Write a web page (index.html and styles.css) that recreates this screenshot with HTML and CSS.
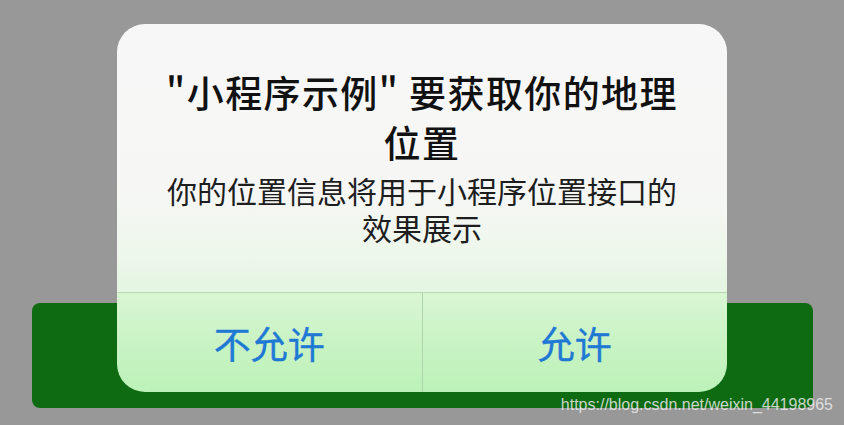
FILE: index.html
```html
<!DOCTYPE html>
<html lang="zh-CN">
<head>
<meta charset="utf-8">
<title>位置授权</title>
<link rel="stylesheet" href="styles.css">
</head>
<body>
<div class="stage">
  <div class="green-bar"></div>
  <div class="dialog">
    <div class="dialog-content">
      <div class="dialog-title">"小程序示例" 要获取你的地理位置</div>
      <div class="dialog-message">你的位置信息将用于小程序位置接口的效果展示</div>
    </div>
    <div class="dialog-actions">
      <div class="dialog-btn">不允许</div>
      <div class="dialog-btn btn-right">允许</div>
    </div>
  </div>
  <div class="watermark">https://blog.csdn.net/weixin_44198965</div>
</div>
</body>
</html>
```
FILE: styles.css
```css
html, body {
  margin: 0;
  padding: 0;
}
body {
  background: #989898;
  font-family: "Noto Sans CJK SC", "Noto Sans", sans-serif;
}
.stage {
  position: relative;
  width: 844px;
  height: 425px;
  overflow: hidden;
  padding-top: 303px;
  box-sizing: border-box;
}
.green-bar {
  margin-left: 32px;
  width: 781px;
  height: 105px;
  background: #0e6b12;
  border-radius: 8px;
}
.dialog {
  position: absolute;
  left: 117px;
  top: 24px;
  width: 610px;
  height: 368px;
  border-radius: 28px;
  overflow: hidden;
  display: flex;
  flex-direction: column;
}
.dialog-content {
  height: 268px;
  box-sizing: border-box;
  padding: 43px 30px 0;
  text-align: center;
  background: linear-gradient(to bottom, #f7f7f7 0%, #f6f7f5 62%, #eef7ec 85%, #e4f6e1 100%);
}
.dialog-title {
  font-size: 37px;
  line-height: 50px;
  font-weight: 500;
  color: #111111;
  letter-spacing: 1.4px;
}
.dialog-message {
  margin-top: 5px;
  padding: 0 10px;
  font-size: 30px;
  line-height: 37px;
  color: #1e1e1e;
}
.dialog-actions {
  flex: 1;
  display: flex;
  border-top: 1px solid #b6d6b4;
  background: linear-gradient(to bottom, #d9f6d3 0%, #c9f3c4 50%, #bcf2b9 100%);
}
.dialog-btn {
  flex: 1;
  display: flex;
  align-items: center;
  justify-content: center;
  font-size: 37px;
  color: #1f79d4;
  -webkit-text-stroke: 0.4px #1f79d4;
}
.btn-right {
  border-left: 1px solid #aed4ab;
}
.watermark {
  position: absolute;
  right: 11px;
  bottom: 11px;
  font-family: "Liberation Sans", Arial, sans-serif;
  font-size: 16px;
  color: rgba(235, 235, 235, 0.85);
}
```
